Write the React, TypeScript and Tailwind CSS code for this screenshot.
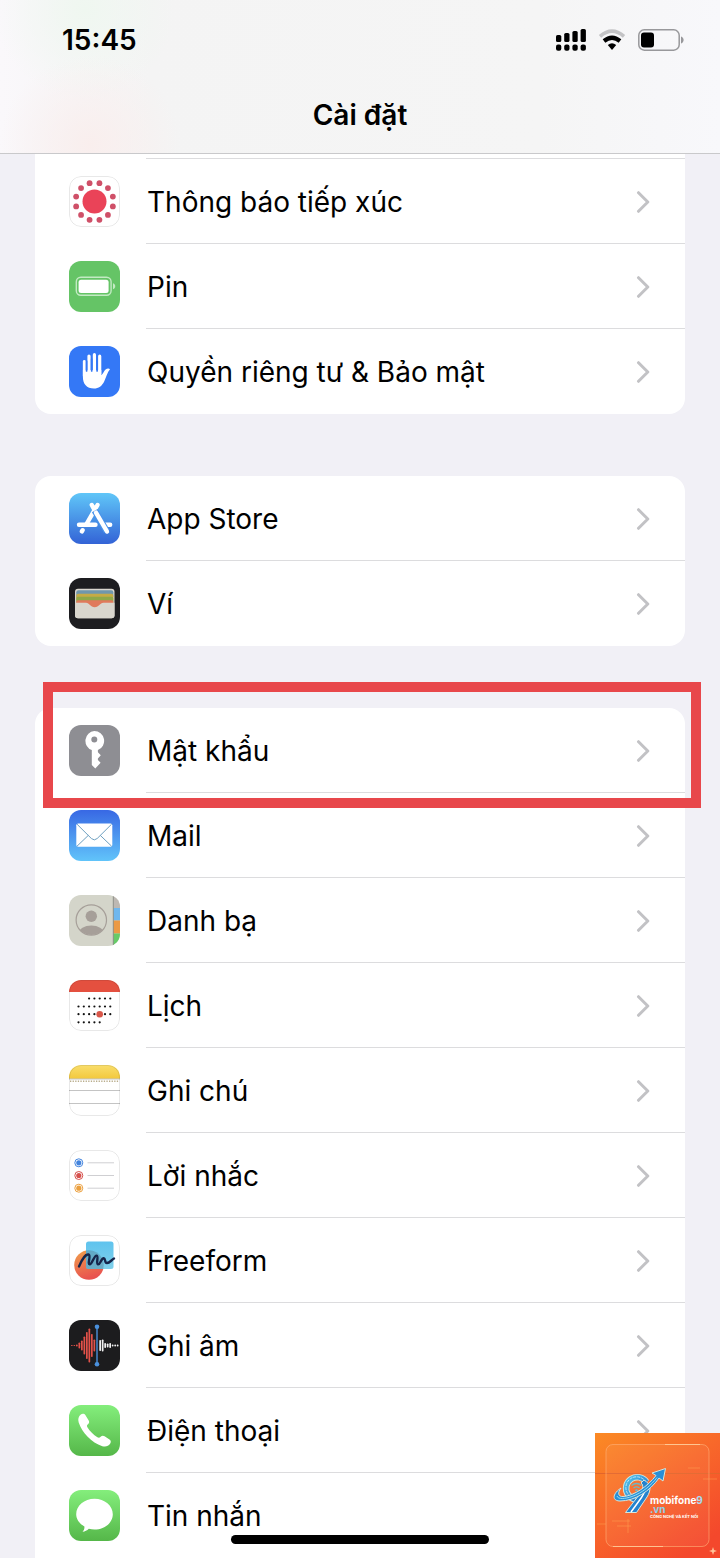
import type { ReactNode } from "react";

interface Item {
  label: string;
  icon: ReactNode;
  highlighted?: boolean;
}

function Tile({ fill, bordered, children }: { fill: string; bordered?: boolean; children: ReactNode }) {
  return (
    <svg viewBox="0 0 51 51" className="size-[51px] shrink-0 overflow-hidden rounded-xl" aria-hidden="true">
      <rect width="51" height="51" fill={fill} />
      {children}
      {bordered && <rect x="0.5" y="0.5" width="50" height="50" rx="11.5" fill="none" stroke="#1c1c1e" strokeOpacity="0.1" />}
    </svg>
  );
}

function Gradient({ id, from, to }: { id: string; from: string; to: string }) {
  return (
    <defs>
      <linearGradient id={id} x1="0" y1="0" x2="0" y2="1">
        <stop offset="0" stopColor={from} />
        <stop offset="1" stopColor={to} />
      </linearGradient>
    </defs>
  );
}

function ExposureIcon() {
  return (
    <Tile fill="#fff" bordered>
      <circle cx="25.5" cy="25.5" r="12" fill="#ea4358" />
      {Array.from({ length: 12 }, (_, i) => {
        const a = ((i * 30 + 15) * Math.PI) / 180;
        return <circle key={i} cx={25.5 + 19 * Math.cos(a)} cy={25.5 + 19 * Math.sin(a)} r="2.9" fill="#cf5068" />;
      })}
    </Tile>
  );
}

function BatteryIcon() {
  return (
    <Tile fill="#65c466">
      <rect x="7.3" y="16.3" width="34.8" height="18" rx="4.5" fill="none" stroke="#c3eac3" strokeWidth="1.4" />
      <rect x="9.6" y="18.7" width="30" height="13.2" rx="2.5" fill="#fff" />
      <path d="M44 22.3c3 1.2 3 4.8 0 6z" fill="#c3eac3" />
    </Tile>
  );
}

function HandIcon() {
  return (
    <Tile fill="#3478f6">
      <g fill="none" stroke="#fff" strokeLinecap="round">
        <path d="M15.3 15.5V30" strokeWidth="2.9" />
        <path d="M20 10V28M25.4 8.7V28M30.7 10.2V28" strokeWidth="3.2" />
      </g>
      <path
        d="M13.9 24h18.4v5.2c1.6-1 2.7-4.2 4.3-5.6 1.5-1.3 3.7-1.2 4.4-.3-2.6 3-4 8.3-5.7 11.9-2.2 4.7-5.7 7.3-10.3 7.3-7.4 0-11.1-4.7-11.1-11.5z"
        fill="#fff"
      />
      <path d="M17.6 15v10M22.7 13v12M28.1 13v12" stroke="#3478f6" strokeWidth="1.7" strokeLinecap="round" />
    </Tile>
  );
}

function AppStoreIcon() {
  return (
    <Tile fill="url(#appstore)">
      <Gradient id="appstore" from="#60c6f8" to="#3363d6" />
      <g fill="none" stroke="#fff" strokeWidth="4.4" strokeLinecap="round">
        <path d="M28.5 12L17.5 31M22.8 12l2.6 4.8M13.6 37.2l-.7 1.2" />
        <path d="M10 31.8h16.500M36 31.800h5.200" />
      </g>
      <path d="M25.800 17.600l12 20.700" stroke="#4a93ea" strokeWidth="6.600" />
      <path d="M27 19.600l11 18.900" stroke="#fff" strokeWidth="4.400" strokeLinecap="round" />
    </Tile>
  );
}

function WalletIcon() {
  return (
    <Tile fill="#1d1d20">
      <rect x="6" y="10.7" width="39.5" height="29.5" rx="3" fill="#d9d6ce" />
      <rect x="7.3" y="12.2" width="37" height="8" rx="2" fill="#6f97ac" />
      <path d="M7.3 17.5q0-1.7 2-1.7h33q2 0 2 1.7v5h-37z" fill="#c5ab45" />
      <path d="M7.3 20q0-1.2 2-1.2h33q2 0 2 1.2v5h-37z" fill="#8fa848" />
      <path d="M7.3 23.5q0-1.2 2-1.2h33q2 0 2 1.2V30h-37z" fill="#e07a5c" />
      <path d="M6 24.8h11c3.5 0 4.3 4.4 8.7 4.4s5.2-4.400 8.700-4.400h11.100v12.400q0 3-3 3H9q-3 0-3-3z" fill="#d9d6ce" />
    </Tile>
  );
}

function KeyIcon() {
  return (
    <Tile fill="#8e8e93">
      <path
        fillRule="evenodd"
        d="M25.3 6a9.9 9.9 0 0 1 3.600 19.100v2.200l2.900 3-2.900 3.200v1.500l2.700 2.700-5.300 5.700-3.500-3.500V25.100A9.900 9.900 0 0 1 25.300 6zm0 5.400a3 3 0 1 0 0 6 3 3 0 0 0 0-6z"
        fill="#fff"
      />
    </Tile>
  );
}

function MailIcon() {
  return (
    <Tile fill="url(#mail)">
      <Gradient id="mail" from="#3868e4" to="#61c4fa" />
      <rect x="7.3" y="13.5" width="36" height="23.3" rx="1.8" fill="#fff" />
      <path
        d="M8 14.2l14.4 14.3q2.9 2.8 5.8 0L42.600 14.200M8 36.200l11.300-10.800M42.600 36.200L31.300 25.400"
        fill="none"
        stroke="#6d9fc0"
        strokeWidth="1"
      />
    </Tile>
  );
}

function ContactsIcon() {
  return (
    <Tile fill="#d4d5ca">
      <clipPath id="contact-face">
        <circle cx="22.3" cy="25" r="15" />
      </clipPath>
      <rect x="44" width="7" height="13" fill="#bdb8b2" />
      <rect x="44" y="13" width="7" height="12.5" fill="#6fb7ee" />
      <rect x="44" y="25.5" width="7" height="13" fill="#eb9a45" />
      <rect x="44" y="38.5" width="7" height="13" fill="#66cb68" />
      <path d="M44.3 0v51" stroke="#8f918a" strokeWidth="1" />
      <circle cx="22.3" cy="21.3" r="5.7" fill="#a69f99" />
      <ellipse cx="22.3" cy="38" rx="12.5" ry="7.5" fill="#a69f99" clipPath="url(#contact-face)" />
      <circle cx="22.3" cy="25" r="15.2" fill="none" stroke="#a69f99" strokeWidth="1.2" />
    </Tile>
  );
}

function CalendarIcon() {
  const rows = [
    { y: 18.5, from: 2, to: 6 },
    { y: 26.5, from: 0, to: 6 },
    { y: 34.2, from: 0, to: 6 },
    { y: 42.3, from: 0, to: 4 },
  ];
  return (
    <Tile fill="#fff" bordered>
      <rect width="51" height="12" fill="#e4503f" />
      {rows.map((r) =>
        Array.from({ length: r.to - r.from + 1 }, (_, i) => (
          <circle key={`${r.y}-${i}`} cx={9.5 + (r.from + i) * 5.3} cy={r.y} r="1.1" fill="#111" />
        ))
      )}
      <circle cx="30.7" cy="34.2" r="3.3" fill="#d9574a" />
    </Tile>
  );
}

function NotesIcon() {
  return (
    <Tile fill="#fff" bordered>
      <Gradient id="notes" from="#f9de6c" to="#f2c83c" />
      <rect width="51" height="14" fill="url(#notes)" />
      <path d="M0 14h51M0 25.5h51M0 38.5h51" stroke="#c4c4c4" strokeWidth="1" />
      <path d="M1 16.3h49" stroke="#b9ad8c" strokeWidth="1.4" strokeDasharray="1.3 1.3" />
    </Tile>
  );
}

function RemindersIcon() {
  return (
    <Tile fill="#fff" bordered>
      {["#4384dd", "#d6504d", "#eba03f"].map((color, i) => (
        <g key={color}>
          <circle cx="9.8" cy={12.8 + i * 12.7} r="4" fill="#fff" stroke={color} strokeWidth="1" />
          <circle cx="9.8" cy={12.8 + i * 12.7} r="2.6" fill={color} />
          <path d={`M18.5 ${12.8 + i * 12.7}H45`} stroke="#cfcfd2" strokeWidth="1" />
        </g>
      ))}
    </Tile>
  );
}

function FreeformIcon() {
  return (
    <Tile fill="#fff" bordered>
      <defs>
        <linearGradient id="ff-ball" x1="0" y1="0" x2="0.3" y2="1">
          <stop offset="0" stopColor="#f0a04b" />
          <stop offset="1" stopColor="#e9534f" />
        </linearGradient>
      </defs>
      <Gradient id="ff-box" from="#5fc3ee" to="#7fd0ea" />
      <circle cx="20" cy="30" r="14.8" fill="url(#ff-ball)" />
      <rect x="17" y="6.5" width="27.5" height="27.5" rx="2.5" fill="url(#ff-box)" />
      <path d="M17 15.5A14.8 14.8 0 0 1 34.2 34H19.500q-2.500 0-2.500-2.500z" fill="#5a8fa8" opacity="0.55" />
      <path
        d="M10 31.5C13 24 17 18.800 19.500 19.500c3 1-1.500 9.500 1.200 9.800 2.500.3 4.300-9.300 7-8.700 2.200.5-1 8.200 1.300 8.700 2.500.5 3-6.300 5.800-6 2 .3.500 4.700 3.200 4.700s4-2.700 7-4.500"
        fill="none"
        stroke="#16254a"
        strokeWidth="2.400"
        strokeLinecap="round"
      />
    </Tile>
  );
}

function VoiceMemosIcon() {
  const red = [1, 1, 2, 6, 10, 18, 27, 34, 23, 12];
  const white = [11, 12, 5, 4, 5, 2, 2, 2];
  return (
    <Tile fill="#1c1c1e">
      {red.map((h, i) => (
        <rect key={i} x={2 + i * 2.5} y={25.5 - h / 2} width="1.7" height={h} rx="0.7" fill="#e25149" />
      ))}
      {white.map((h, i) => (
        <rect key={i} x={30.3 + i * 2.5} y={25.5 - h / 2} width="1.7" height={h} rx="0.7" fill="#f1f1f1" />
      ))}
      <path d="M28 6.5v38" stroke="#4a90dc" strokeWidth="1.4" />
      <circle cx="28" cy="6.8" r="2.300" fill="#4a90dc" />
      <circle cx="28" cy="44.2" r="2.300" fill="#4a90dc" />
    </Tile>
  );
}

function PhoneIcon() {
  return (
    <Tile fill="url(#phone)">
      <Gradient id="phone" from="#84ee7c" to="#55b749" />
      <path
        d="M11.8 9.6c1.5-1.200 3.600-.9 4.700.6l3.200 5.200c.8 1.500.5 2.700-.8 3.900-1 .9-1.300 1.700-.5 3 2.500 4 6 7.500 10 10 1.400.8 2.200.5 3.200-.5 1.200-1.300 2.500-1.500 4-.6l4.900 3.300c1.500 1 1.700 2.700.6 4.300-1.800 2.500-4.400 3.400-7.800 2.400C22.500 37.700 13 27.500 9.700 17.500c-1-3.200-.2-6 2.100-7.900z"
        fill="#fff"
      />
    </Tile>
  );
}

function MessagesIcon() {
  return (
    <Tile fill="url(#messages)">
      <Gradient id="messages" from="#84ee7c" to="#55b749" />
      <path
        d="M25.5 8.8c10.2 0 18.300 6.900 18.300 15.400s-8.100 15.400-18.300 15.400c-2 0-3.900-.3-5.700-.8-1.700 1.700-3.800 2.900-6.300 3 1.500-1.500 2.100-3.300 1.900-5.400-5-2.800-8.200-7.200-8.200-12.200 0-8.500 8.100-15.400 18.300-15.400z"
        fill="#fff"
      />
    </Tile>
  );
}

const groups: Item[][] = [
  [
    { label: "Thông báo tiếp xúc", icon: <ExposureIcon /> },
    { label: "Pin", icon: <BatteryIcon /> },
    { label: "Quyền riêng tư & Bảo mật", icon: <HandIcon /> },
  ],
  [
    { label: "App Store", icon: <AppStoreIcon /> },
    { label: "Ví", icon: <WalletIcon /> },
  ],
  [
    { label: "Mật khẩu", icon: <KeyIcon />, highlighted: true },
    { label: "Mail", icon: <MailIcon /> },
    { label: "Danh bạ", icon: <ContactsIcon /> },
    { label: "Lịch", icon: <CalendarIcon /> },
    { label: "Ghi chú", icon: <NotesIcon /> },
    { label: "Lời nhắc", icon: <RemindersIcon /> },
    { label: "Freeform", icon: <FreeformIcon /> },
    { label: "Ghi âm", icon: <VoiceMemosIcon /> },
    { label: "Điện thoại", icon: <PhoneIcon /> },
    { label: "Tin nhắn", icon: <MessagesIcon /> },
  ],
];

function StatusIcons() {
  return (
    <div className="flex items-center gap-3">
      <svg viewBox="0 0 30 22" className="h-[22px] w-[30px]" aria-hidden="true">
        {[7, 9, 11, 13].map((h, i) => (
          <g key={h}>
            <rect x={i * 8.2} y={13 - h} width="5.3" height={h} rx="1.6" />
            <rect x={i * 8.2} y="15.500" width="5.3" height="6.3" rx="2" />
          </g>
        ))}
      </svg>
      <svg viewBox="0 0 28 22" className="h-[22px] w-7" aria-hidden="true">
        <path d="M2 7.3Q14-3 26 7.3" fill="none" stroke="#c3c3c5" strokeWidth="3.6" />
        <path d="M6 12q8-6.500 16 0" fill="none" stroke="#000" strokeWidth="4.2" />
        <path d="M9.800 16q4.200-3.400 8.400 0L14 21z" />
      </svg>
      <svg viewBox="0 0 46 22" className="h-[22px] w-[46px]" aria-hidden="true">
        <rect x="0.8" y="0.8" width="40.4" height="20.4" rx="5.5" fill="none" stroke="#98989b" strokeWidth="1.5" />
        <rect x="3" y="3.5" width="13" height="15" rx="3" />
        <path d="M43 7.5c3.5 1.300 3.500 5.700 0 7z" fill="#98989b" />
      </svg>
    </div>
  );
}

function Row({ item, last }: { item: Item; last: boolean }) {
  return (
    <li className="relative">
      <a href="#" className="flex h-[85px] items-center gap-[26px] pl-[34px]">
        {item.icon}
        <span
          className={`flex h-full min-w-0 flex-1 items-center justify-between border-b pt-px pr-[35px] pl-px ${last ? "border-transparent" : "border-[#dcdcde]"}`}
        >
          <span className="text-[28px] leading-9 text-black">{item.label}</span>
          <svg viewBox="0 0 14 22" className="h-[22px] w-3.5" aria-hidden="true">
            <path d="M2.5 1.7l9.300 9.300-9.300 9.300" fill="none" stroke="#c2c2c5" strokeWidth="3" strokeLinecap="round" strokeLinejoin="round" />
          </svg>
        </span>
      </a>
      {item.highlighted && (
        <div className="pointer-events-none absolute -top-[26px] -right-4 -bottom-[15px] left-2 z-10 border-10 border-[#e8474b]" />
      )}
    </li>
  );
}

function Watermark() {
  return (
    <div className="absolute right-0 bottom-0 z-20 size-[125px]">
      <svg viewBox="0 0 125 125" className="size-full" aria-hidden="true">
        <defs>
          <linearGradient id="wm-bg" x1="0" y1="0" x2="0.7" y2="1">
            <stop offset="0" stopColor="#fb8a24" />
            <stop offset="0.5" stopColor="#f8682a" />
            <stop offset="1" stopColor="#f4482c" />
          </linearGradient>
          <linearGradient id="wm-nine" x1="0" y1="0" x2="1" y2="1">
            <stop offset="0" stopColor="#55c4ea" />
            <stop offset="1" stopColor="#1769c4" />
          </linearGradient>
        </defs>
        <rect width="125" height="125" fill="url(#wm-bg)" />
        <path d="M0 40.500h125" stroke="#e2652b" strokeWidth="1" />
        <rect x="11" y="11.500" width="103" height="102" rx="7" fill="#fff" fillOpacity="0.05" stroke="#ffb27a" strokeOpacity="0.6" />
        <path d="M18 113.500h50M70 11.500h35" stroke="#ffd9a8" strokeWidth="1" strokeOpacity="0.7" />
        <path d="M93 35h12M17 88h18M22 93h14M33 86v14M2 91h9M108 46h14" stroke="#ffa552" strokeWidth="0.7" strokeOpacity="0.7" />
        <g fill="none">
          <path d="M51.500 49A11.200 11.200 0 1 0 48 65" stroke="#d5e6dc" strokeWidth="6.500" />
          <path d="M51.500 49A11.200 11.200 0 1 0 48 65" stroke="url(#wm-nine)" strokeWidth="4.600" />
          <path d="M51.200 49.500A10.800 10.800 0 1 0 47 64" stroke="#dff4ff" strokeWidth="0.8" strokeDasharray="3 1" />
        </g>
        <path d="M49 47c7 4 7.500 10 3 17L41.500 79.500H30.500L44 62c4-5 5-10 2-12z" fill="#2383d0" stroke="#d5e6dc" strokeWidth="1" />
        <path d="M50 56c0 4-3 8-6 12l-8 11" fill="none" stroke="#fff" strokeWidth="1.500" />
        <path
          d="M26 55c-9 6-9 13-1 13 15 0 30-10 39-23l4 3 2.500-12.500L57 40l4 2.500C53 53 39 63 28 63.500c-5 .2-5.500-3.500-2-8.500z"
          fill="#2a8fd6"
          stroke="#d5e6dc"
          strokeWidth="1"
          strokeLinejoin="round"
        />
        <path d="M22 63c1 3.500 8 3 15 .5 10-3.500 19-11 25-19" fill="none" stroke="#8fdcf4" strokeWidth="1" />
        <path d="M36.500 52.500q5-4 10 0M38.500 55q3-2.400 6 0" fill="none" stroke="#6fb7c4" strokeWidth="1.300" />
        <circle cx="41.500" cy="57.300" r="1.200" fill="#6fb7c4" />
        <path d="M118 114l1 3 3 1-3 1-1 3-1-3-3-1 3-1z" fill="#ffc49b" />
      </svg>
      <div className="absolute top-[63px] left-[55px] font-bold whitespace-nowrap text-white">
        <p className="text-[10px] leading-[9px]">
          mobifone<span className="text-[#a8dcf0]">9</span>
        </p>
        <p className="text-[10px] leading-[9px] text-[#8fd0ea]">.vn</p>
        <p className="text-[4px] leading-[6px]">CÔNG NGHỆ VÀ KẾT NỐI</p>
      </div>
    </div>
  );
}

export default function App() {
  return (
    <div className="relative overflow-hidden bg-[#f1f0f6] font-['Inter','Noto_Sans',sans-serif] text-black">
      <header className="border-b border-[#c9c9cb] bg-[#f5f5f6] bg-[radial-gradient(circle_at_90px_145px,#f9eeed_0px,transparent_90px),radial-gradient(circle_at_85px_10px,#eff7f0_0px,transparent_90px),linear-gradient(to_right,#faf8fb_0px,#f4f4f4_150px,#f5f5f5_75%,#f8f8fb_100%)]">
        <div className="flex h-20 items-center justify-between pr-9 pl-[62px]">
          <time className="text-[28px] leading-9 font-semibold">15:45</time>
          <StatusIcons />
        </div>
        <h1 className="h-[73px] pt-[17px] text-center text-[28px] leading-9 font-semibold">Cài đặt</h1>
      </header>

      <main className="flex flex-col gap-[62px] px-[35px]">
        {groups.map((items, i) => (
          <section key={i} className={i === 0 ? "rounded-b-2xl bg-white" : i === 1 ? "rounded-2xl bg-white" : "rounded-t-2xl bg-white"}>
            {i === 0 && <div className="ml-[111px] h-[5px] border-b border-[#dcdcde]" />}
            <ul>
              {items.map((item, j) => (
                <Row key={item.label} item={item} last={j === items.length - 1} />
              ))}
            </ul>
          </section>
        ))}
      </main>

      <div className="absolute bottom-3.5 left-1/2 z-10 h-[9px] w-[258px] -translate-x-1/2 rounded-full bg-black" />
      <Watermark />
    </div>
  );
}
